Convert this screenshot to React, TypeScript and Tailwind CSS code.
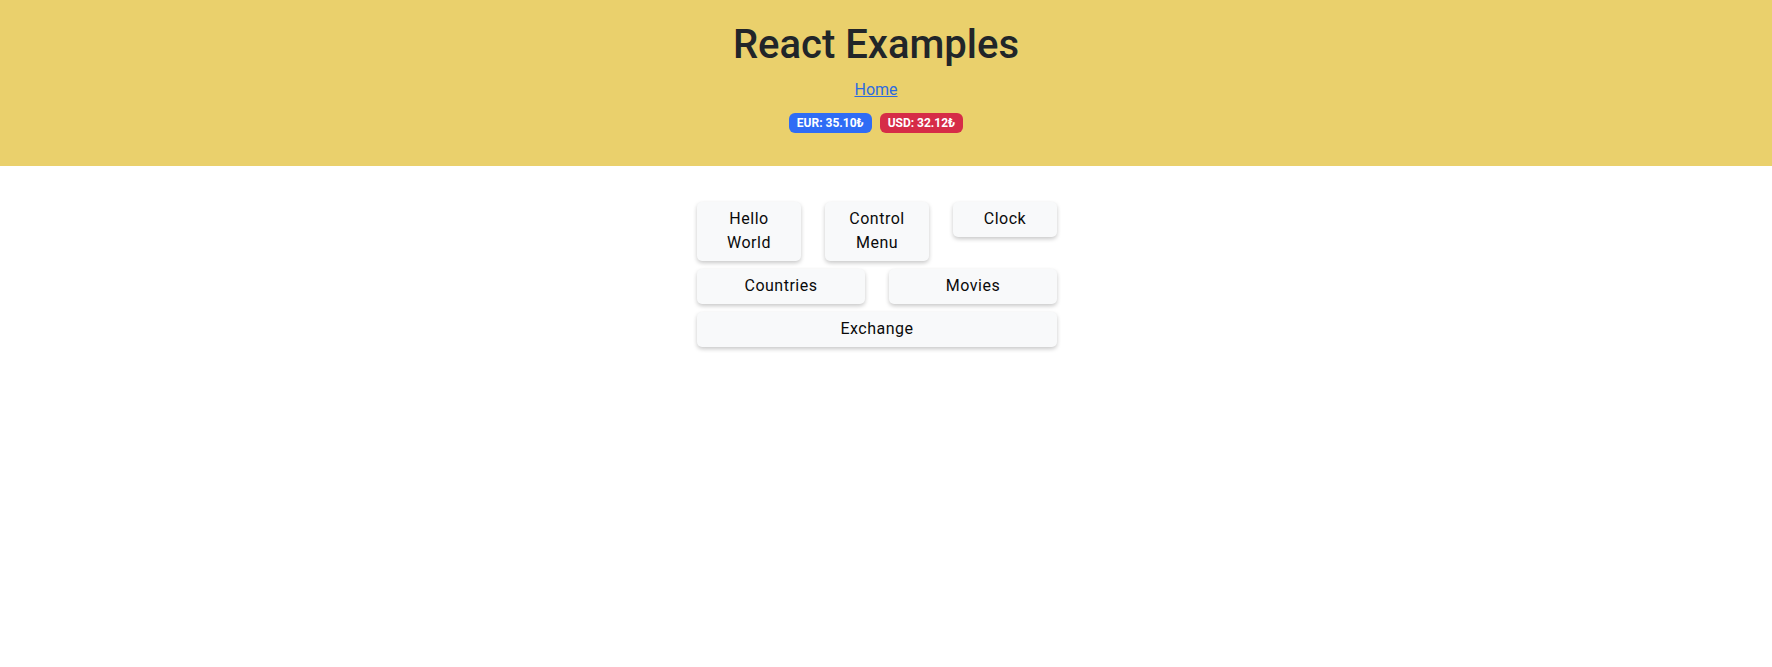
const links = [
  { label: 'Hello World' },
  { label: 'Control Menu' },
  { label: 'Clock' },
]

function NavButton({ label }: { label: string }) {
  return (
    <button className="bg-[#f8f9fa] rounded-[5px] shadow-[0_2px_4px_rgba(0,0,0,0.22)] py-[5.5px] px-5 text-[16px] leading-6 tracking-[0.5px] text-[#0a0a0a]">
      {label}
    </button>
  )
}

export default function App() {
  return (
    <div className="min-h-screen bg-white font-['Roboto',sans-serif]">
      <header className="bg-[#ead06c] pt-[21px] pb-[33px] pr-[20px]">
        <div className="flex flex-col items-center">
          <h1 className="text-[40px] leading-[1.2] font-medium text-[#212529]">React Examples</h1>
          <a href="#" className="mt-[8.5px] text-[16px] leading-6 text-[#2d6be0] underline">
            Home
          </a>
          <div className="mt-[11px] flex gap-2">
            <span className="bg-[#2f6cf5] text-white text-[12px] font-bold leading-5 px-[8px] rounded-[6px]">
              EUR: 35.10₺
            </span>
            <span className="bg-[#d62c47] text-white text-[12px] font-bold leading-5 px-[8px] rounded-[6px]">
              USD: 32.12₺
            </span>
          </div>
        </div>
      </header>

      <main className="pt-[36px] pr-[18px] flex justify-center">
        <div className="w-[360px] flex flex-col gap-2">
          <div className="grid grid-cols-3 gap-x-6 items-start">
            {links.map((l) => (
              <NavButton key={l.label} label={l.label} />
            ))}
          </div>
          <div className="grid grid-cols-2 gap-x-6">
            <NavButton label="Countries" />
            <NavButton label="Movies" />
          </div>
          <NavButton label="Exchange" />
        </div>
      </main>
    </div>
  )
}
